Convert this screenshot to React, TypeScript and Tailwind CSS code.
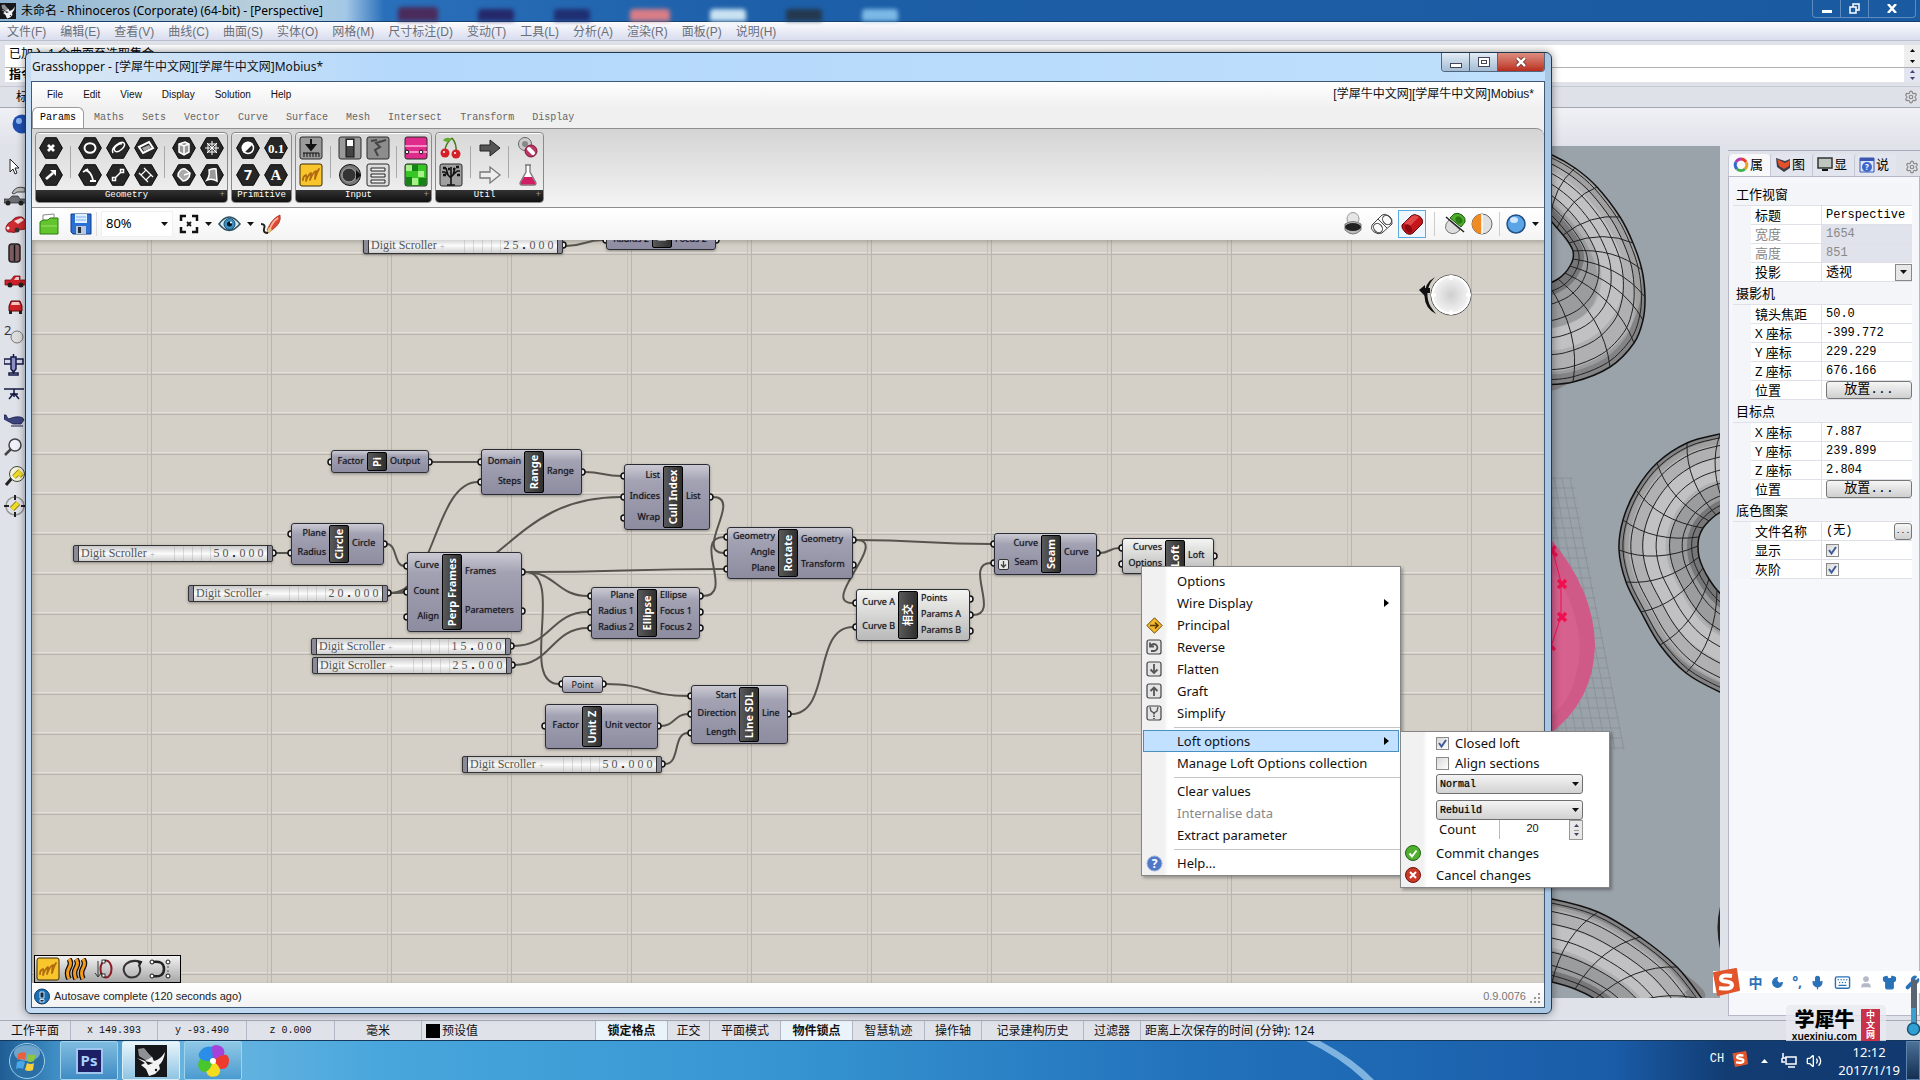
import type { ReactNode } from "react";
import { Keyboard, Mic, Moon, Settings, Shirt, User, Volume2, Wrench } from "lucide-react";
import clsx from "clsx";

type Port = [string, number];
type Pt = [number, number];

interface NodeSpec {
  title: string;
  x: number;
  y: number;
  w: number;
  h: number;
  bar: number;
  light?: boolean;
  ins: Port[];
  outs: Port[];
}

const nodes: NodeSpec[] = [
  { title: "Ellipse", x: 574, y: -42, w: 110, h: 52, bar: 46, ins: [["Plane", -33], ["Radius 1", -17], ["Radius 2", 0]], outs: [["Ellipse", -33], ["Focus 1", -17], ["Focus 2", 0]] },
  { title: "Pi", x: 299, y: 210, w: 98, h: 23, bar: 36, ins: [["Factor", 222]], outs: [["Output", 222]] },
  { title: "Range", x: 449, y: 209, w: 101, h: 46, bar: 43, ins: [["Domain", 222], ["Steps", 242]], outs: [["Range", 232]] },
  { title: "Cull Index", x: 592, y: 224, w: 86, h: 66, bar: 39, ins: [["List", 236], ["Indices", 257], ["Wrap", 278]], outs: [["List", 257]] },
  { title: "Circle", x: 259, y: 283, w: 93, h: 42, bar: 38, ins: [["Plane", 294], ["Radius", 313]], outs: [["Circle", 304]] },
  { title: "Perp Frames", x: 375, y: 312, w: 115, h: 80, bar: 35, ins: [["Curve", 326], ["Count", 352], ["Align", 377]], outs: [["Frames", 332], ["Parameters", 371]] },
  { title: "Ellipse", x: 559, y: 347, w: 109, h: 52, bar: 46, ins: [["Plane", 356], ["Radius 1", 372], ["Radius 2", 388]], outs: [["Ellipse", 356], ["Focus 1", 372], ["Focus 2", 388]] },
  { title: "Rotate", x: 695, y: 287, w: 126, h: 52, bar: 51, ins: [["Geometry", 297], ["Angle", 313], ["Plane", 329]], outs: [["Geometry", 300], ["Transform", 325]] },
  { title: "Unit Z", x: 513, y: 464, w: 113, h: 45, bar: 37, ins: [["Factor", 486]], outs: [["Unit vector", 486]] },
  { title: "Line SDL", x: 659, y: 445, w: 97, h: 59, bar: 48, ins: [["Start", 456], ["Direction", 474], ["Length", 493]], outs: [["Line", 474]] },
  { title: "相交", x: 824, y: 349, w: 114, h: 52, bar: 42, light: true, ins: [["Curve A", 363], ["Curve B", 387]], outs: [["Points", 359], ["Params A", 375], ["Params B", 391]] },
  { title: "Seam", x: 962, y: 293, w: 103, h: 42, bar: 47, ins: [["Curve", 304], ["Seam", 323]], outs: [["Curve", 313]] },
  { title: "Loft", x: 1090, y: 298, w: 92, h: 36, bar: 43, light: true, ins: [["Curves", 308], ["Options", 324]], outs: [["Loft", 316]] },
];

const scrollers = [
  { x: 331, y: -3, tens: "2", ones: "5" },
  { x: 41, y: 305, tens: "5", ones: "0" },
  { x: 156, y: 345, tens: "2", ones: "0" },
  { x: 279, y: 398, tens: "1", ones: "5" },
  { x: 280, y: 417, tens: "2", ones: "5" },
  { x: 430, y: 516, tens: "5", ones: "0" },
];

const wires: [number, number, number, number][] = [
  [531, 6, 574, 0],
  [241, 313, 259, 313],
  [352, 304, 375, 326],
  [356, 353, 375, 352],
  [356, 353, 449, 242],
  [356, 353, 592, 257],
  [397, 222, 449, 222],
  [550, 232, 592, 236],
  [678, 257, 695, 313],
  [668, 356, 695, 297],
  [490, 332, 695, 329],
  [490, 332, 559, 356],
  [490, 332, 530, 444],
  [479, 406, 559, 372],
  [480, 425, 559, 388],
  [571, 444, 659, 456],
  [626, 486, 659, 474],
  [630, 524, 659, 493],
  [756, 474, 824, 387],
  [821, 300, 962, 304],
  [821, 300, 824, 363],
  [938, 375, 962, 323],
  [1065, 313, 1090, 308],
];

function wirePath([x1, y1, x2, y2]: [number, number, number, number]) {
  const reach = Math.max((x2 - x1) * 0.5, Math.min(Math.abs(y2 - y1) * 0.6, 44));
  return `M${x1 + 3} ${y1}C${x1 + reach} ${y1} ${x2 - reach} ${y2} ${x2 - 3} ${y2}`;
}

function PortDot({ side, x, y }: { side: "in" | "out"; x: number; y: number }) {
  const d = side === "in" ? `M${x} ${y - 3}a3 3 0 0 0 0 6` : `M${x} ${y - 3}a3 3 0 0 1 0 6`;
  return <path d={d} fill="#fff" stroke="#111" strokeWidth="1.5" />;
}

function GraphNode({ n }: { n: NodeSpec }) {
  return (
    <div
      className={clsx(
        "absolute rounded-[3px] border border-[#2c2c34] text-[9px] leading-[12px] text-[#14141c] shadow-[0_1px_3px_rgba(0,0,0,0.35)] [text-shadow:0_0_1px_rgba(20,20,28,0.6)]",
        n.light ? "bg-linear-to-b from-[#f4f4f2] to-[#b9b9b9]" : "bg-linear-to-b from-[#cbcad3] via-[#a3a2b3] via-25% to-[#8d8ca0]",
      )}
      style={{ left: n.x, top: n.y, width: n.w, height: n.h }}
    >
      {n.ins.map(([label, y]) => (
        <span key={label} className="absolute text-right whitespace-nowrap" style={{ right: n.w - n.bar + 2, top: y - n.y - 8 }}>
          {label}
        </span>
      ))}
      <span
        className="absolute inset-y-px flex w-5 items-center justify-center rounded-xs border border-black bg-linear-to-r from-[#5a5a5a] to-[#2f2f2f]"
        style={{ left: n.bar - 1 }}
      >
        <span className="-rotate-90 text-[11px] font-bold whitespace-nowrap text-white">{n.title}</span>
      </span>
      {n.outs.map(([label, y]) => (
        <span key={label} className="absolute whitespace-nowrap" style={{ left: n.bar + 22, top: y - n.y - 8 }}>
          {label}
        </span>
      ))}
      {n.title === "Seam" && (
        <svg className="absolute bottom-1 left-[3px]" width="11" height="11" viewBox="0 0 11 11">
          <rect x=".5" y=".5" width="10" height="10" rx="1.5" fill="#e8e8e8" stroke="#333" />
          <path d="M5.500 2v6M3 5.500l2.500 2.700L8 5.500" fill="none" stroke="#444" strokeWidth="1.300" />
        </svg>
      )}
    </div>
  );
}

function Scroller({ x, y, tens, ones }: { x: number; y: number; tens: string; ones: string }) {
  return (
    <div
      className="absolute flex h-[17px] w-[200px] overflow-hidden rounded-[2px] border border-[#333] bg-[#8b8a98] font-['Liberation_Serif',serif] text-[12px] leading-[15px] shadow-[0_1px_3px_rgba(0,0,0,0.35)]"
      style={{ left: x, top: y }}
    >
      <div className="mx-[4px] flex flex-1 items-center border-x border-[#333] bg-linear-to-b from-[#c9c9c9] via-[#fbfbfb] to-[#cfcfcf] text-[#555]">
        <span className="flex-1 pl-0.5 whitespace-nowrap">
          Digit Scroller <span className="text-[9px] text-[#aaa]">+</span>
        </span>
        <span className="h-full w-[46px] bg-[repeating-linear-gradient(90deg,transparent_0_8px,rgba(160,160,160,0.35)_8px_9px)]" />
        <span className="w-[9px] text-center">{tens}</span>
        <span className="w-[9px] text-center">{ones}</span>
        <span className="w-[8px] text-center font-bold text-black">.</span>
        <span className="w-[9px] text-center">0</span>
        <span className="w-[9px] text-center">0</span>
        <span className="mr-0.5 w-[9px] text-center">0</span>
      </div>
    </div>
  );
}

function Canvas() {
  return (
    <div className="relative flex-1 overflow-hidden bg-[#d4d0c8] bg-[linear-gradient(90deg,transparent_115px,#c5c1b9_115px_116px,transparent_116px_119px,#b9b5ae_119px_120px),linear-gradient(180deg,transparent_12px,#e1ded8_12px_13px,transparent_13px_14px,#b9b5ae_14px_15px,transparent_15px)] bg-size-[120px_40px] shadow-[inset_2px_2px_4px_rgba(90,85,75,0.35)] font-['Noto_Sans','Noto_Sans_CJK_SC',sans-serif]">
      <svg className="absolute inset-0" width="1240" height="640" fill="none">
        {wires.map((w) => (
          <path key={w.join()} d={wirePath(w)} stroke="#57534d" strokeWidth="2" />
        ))}
        {nodes.map((n) => (
          <g key={n.title + n.x}>
            {n.ins.map(([label, y]) => <PortDot key={label} side="in" x={n.x} y={y} />)}
            {n.outs.map(([label, y]) => <PortDot key={label} side="out" x={n.x + n.w} y={y} />)}
          </g>
        ))}
        {scrollers.map((s) => <PortDot key={s.x} side="out" x={s.x + 200} y={s.y + 8} />)}
        <PortDot side="in" x={530} y={444} />
        <PortDot side="out" x={571} y={444} />
      </svg>
      {nodes.map((n) => <GraphNode key={n.title + n.x} n={n} />)}
      {scrollers.map((s) => <Scroller key={s.x} {...s} />)}
      <div className="absolute top-[436px] left-[530px] h-[17px] w-[41px] rounded-[3px] border border-[#2c2c34] bg-linear-to-b from-[#dddde4] to-[#9a99aa] text-center text-[9px] leading-[15px] text-[#14141c] shadow-sm">Point</div>

      <svg className="absolute top-[32px] right-[71px]" width="54" height="46" viewBox="0 0 54 46">
        <defs>
          <radialGradient id="dial"><stop offset="0" stopColor="#cfcfcf" /><stop offset="1" stopColor="#f7f7f7" /></radialGradient>
        </defs>
        <path d="M16 5A21 21 0 0 0 17 42L14 38A24 24 0 0 1 12 10Z" fill="#111" />
        <path d="M0 18l6-5v3h5v5H6v3z" fill="#111" />
        <circle cx="32" cy="23" r="20" fill="url(#dial)" stroke="#555" />
        <circle cx="32" cy="23" r="18.500" fill="none" stroke="#fff" strokeWidth="2" />
        <path d="M32 3v5M32 38v5M12 23h5M47 23h5" stroke="#fff" strokeWidth="3" />
      </svg>

      <div className="absolute bottom-0 left-[2px] flex h-[28px] w-[147px] items-center gap-1 border border-black bg-linear-to-b from-[#f2f2f2] to-[#a8a8a8] pl-px">
        <button aria-label="Sketch" className="h-[24px] w-[24px]"><SketchIcon /></button>
        <button aria-label="Waves">
          <svg width="24" height="22" viewBox="0 0 24 22" fill="none">
            <path d="M5 1q3 4 0 9t0 11M12 1q3 4 0 9t0 11M19 1q3 4 0 9t0 11" stroke="#111" strokeWidth="5.500" />
            <path d="M5 1q3 4 0 9t0 11M12 1q3 4 0 9t0 11M19 1q3 4 0 9t0 11" stroke="#f59a1c" strokeWidth="3" />
          </svg>
        </button>
        <button aria-label="Rotate curve">
          <svg width="24" height="22" viewBox="0 0 24 22" fill="none"><ellipse cx="14" cy="11" rx="5.500" ry="8.500" stroke="#8b1c24" strokeWidth="2" /><path d="M6 3v15M3 15l3 4 3-4" stroke="#333" /><rect x="10" y="2" width="3" height="3" fill="#fff" stroke="#111" strokeWidth=".8" /><rect x="10" y="16" width="3" height="3" fill="#fff" stroke="#111" strokeWidth=".8" /></svg>
        </button>
        <button aria-label="Closed curve">
          <svg width="24" height="22" viewBox="0 0 24 22" fill="none"><path d="M21 4Q12 1 6 6C1 11 5 19 11 19.500c8 0 11-6 8-12z" stroke="#333" strokeWidth="2" /><path d="M17 3l5 0-2 5z" fill="#222" /></svg>
        </button>
        <button aria-label="Control points">
          <svg width="24" height="22" viewBox="0 0 24 22" fill="none"><path d="M4 4Q16 2 16 11T4 18" stroke="#222" strokeWidth="2.500" /><path d="M20 4v14" stroke="#555" strokeDasharray="2 2" /><g fill="#fff" stroke="#111"><circle cx="4" cy="4" r="2" /><circle cx="4" cy="18" r="2" /><circle cx="20" cy="4" r="2" /><circle cx="20" cy="18" r="2" /></g></svg>
        </button>
      </div>
    </div>
  );
}

function SketchIcon() {
  return (
    <svg width="24" height="24" viewBox="0 0 24 24">
      <rect x="1" y="1" width="22" height="22" rx="2" fill="#f8c52c" stroke="#3a2c06" />
      <path d="M4 17q0-4 3-5 1 3 0 6 2-6 5-8 0 4-1 7 3-8 6-9-1 5-1 8 2-7 4-10" fill="none" stroke="#b06a10" strokeWidth="1.800" strokeLinejoin="round" strokeLinecap="round" />
    </svg>
  );
}

function Hex({ label, children }: { label: string; children: ReactNode }) {
  return (
    <button aria-label={label}>
      <svg width="24" height="22" viewBox="0 0 24 22" fill="none" stroke="#fff" strokeWidth="1.500">
        <path d="M6.500 .7h11L23.400 11l-5.900 10.300h-11L.6 11z" fill="#262626" stroke="#0a0a0a" strokeWidth="1" />
        {children}
      </svg>
    </button>
  );
}

function Tile({ label, fill = "#9a9a9a", children }: { label: string; fill?: string; children: ReactNode }) {
  return (
    <button aria-label={label}>
      <svg width="24" height="24" viewBox="0 0 24 24" fill="none">
        <rect x="1" y="1" width="22" height="22" rx="2" fill={fill} stroke="#2a2a2a" />
        {children}
      </svg>
    </button>
  );
}

function IconGrid({ children, className }: { children: ReactNode; className?: string }) {
  return <div className={clsx("grid grid-flow-col grid-rows-[27px_27px] place-items-center gap-x-1", className)}>{children}</div>;
}

function RibbonGroup({ name, expand = true, className, children }: { name: string; expand?: boolean; className?: string; children: ReactNode }) {
  return (
    <section className={clsx("flex h-[71px] flex-col overflow-hidden rounded-sm border border-[#8a8a8a] bg-linear-to-b from-[#d8d8d8] to-[#f2f2f2] shadow-[inset_0_1px_0_#fff]", className)}>
      <div className="flex flex-1 items-center justify-between px-[3px]">{children}</div>
      <div className={clsx("relative h-3 bg-linear-to-b from-[#333] to-[#111] text-center font-['Liberation_Mono',monospace] text-[9px] leading-[11px] text-white", expand && "pr-2.5")}>
        {name}
        {expand && <span className="absolute right-0.5 text-[#999]">+</span>}
      </div>
    </section>
  );
}

const Divider = () => <span className="h-8 w-px bg-[#a8a8a8]" />;

function Ribbon() {
  return (
    <div className="flex h-20 gap-[3px] rounded-tr-lg border-t border-b border-[#8e8e8e] bg-linear-to-b from-[#d4d4d4] to-[#f4f4f4] px-[3px] pt-[3px]">
      <RibbonGroup name="Geometry" className="w-[193px]">
        <IconGrid>
          <Hex label="Point"><path d="M9 8l6 6M15 8l-6 6" strokeWidth="2.800" /></Hex>
          <Hex label="Vector"><path d="M7 15l7-6" strokeWidth="2.500" /><path d="M11 6h6v6z" fill="#fff" stroke="none" /></Hex>
        </IconGrid>
        <Divider />
        <IconGrid>
          <Hex label="Circle"><ellipse cx="12" cy="11" rx="5.500" ry="4.800" strokeWidth="2" /></Hex>
          <Hex label="Circular arc"><path d="M7 6q6 1 8 10M5 8l5-3M12 17h6" strokeWidth="1.800" /></Hex>
          <Hex label="Curve"><path d="M7 16c-3-5 8-13 11-10s-6 11-9 8 4-8 7-7" /></Hex>
          <Hex label="Line"><path d="M8 15l8-8" /><path d="M6.500 13.500h3v3h-3zM14.500 5.500h3v3h-3z" fill="#262626" /></Hex>
          <Hex label="Plane"><path d="M5 10l10-5 4 6-10 5z" strokeWidth="2" /><path d="M8 11l7-3 2 3-7 3z" fill="#aaa" stroke="none" /></Hex>
          <Hex label="Rectangle"><path d="M12 6l5 5-5 5-5-5zM10 4l9 9M5 9l9 9" strokeWidth="1.200" /></Hex>
        </IconGrid>
        <Divider />
        <IconGrid>
          <Hex label="Box"><path d="M7 7l6-2 4 2v8l-5 3-5-3z" fill="#999" /><path d="M7 7l5 2 5-2M12 9v9" /></Hex>
          <Hex label="Brep"><path d="M6 12c0-5 4-8 7-7l5 4c0 5-4 8-7 8z" fill="#aaa" /><path d="M12 11l6-2" /></Hex>
          <Hex label="Mesh"><path d="M12 4v14M5 11h14M7 6l10 10M17 6L7 16M8 7h8v8H8z" strokeWidth="1" /></Hex>
          <Hex label="Surface"><path d="M9 6q5-2 7-1l1 12q-5-3-10-1 3-4 2-10z" fill="#999" /></Hex>
        </IconGrid>
      </RibbonGroup>
      <RibbonGroup name="Primitive" expand={false} className="w-[61px]">
        <IconGrid className="mx-auto">
          <Hex label="Boolean"><circle cx="12" cy="11" r="5.500" /><path d="M8 15A5.500 5.500 0 0 1 16 7z" fill="#fff" /></Hex>
          <Hex label="Integer"><text x="12" y="16" textAnchor="middle" fontSize="14" fontWeight="700" fill="#fff" stroke="none">7</text></Hex>
          <Hex label="Number"><text x="12" y="16" textAnchor="middle" fontSize="13" fontWeight="700" fontFamily="Liberation Serif" fill="#fff" stroke="none">0.1</text></Hex>
          <Hex label="Text"><text x="12" y="16" textAnchor="middle" fontSize="15" fontWeight="700" fontFamily="Liberation Serif" fill="#fff" stroke="none">A</text></Hex>
        </IconGrid>
      </RibbonGroup>
      <RibbonGroup name="Input" className="w-[137px]">
        <IconGrid>
          <Tile label="Button"><path d="M12 3v8M8 9l4 5 4-5z" fill="#111" stroke="#111" strokeWidth="2" /><path d="M4 17h16M5 17v4M8 17v4M11 17v4M14 17v4M17 17v4M20 17v4" stroke="#111" /></Tile>
          <button aria-label="Graph"><SketchIcon /></button>
        </IconGrid>
        <Divider />
        <IconGrid>
          <Tile label="Slider"><rect x="8" y="3" width="8" height="18" fill="#444" stroke="#111" /><path d="M9 4h6v6H9z" fill="#fff" /></Tile>
          <button aria-label="Knob"><svg width="24" height="24" viewBox="0 0 24 24"><circle cx="12" cy="12" r="10.500" fill="#777" stroke="#111" /><circle cx="11" cy="12" r="7" fill="#333" stroke="#aaa" /><path d="M18 7l5 5-5 5z" fill="#111" /></svg></button>
          <Tile label="Scroller" fill="#8d8d8d"><path d="M20 4L10 7l4 4-5 3 3 6M5 5l6-1" stroke="#444" strokeWidth="2" /></Tile>
          <Tile label="Value list" fill="#ddd"><path d="M5 5h14v3H5zM5 11h14v3H5zM5 17h14v3H5z" stroke="#222" fill="#eee" /></Tile>
        </IconGrid>
        <Divider />
        <IconGrid>
          <Tile label="Gradient" fill="#e02a8c"><path d="M1 10h22M1 16h22" stroke="#ffb3dc" strokeWidth="1.500" /><circle cx="3" cy="16" r="1.800" fill="#fff" stroke="#111" /><circle cx="17" cy="16" r="1.800" fill="#fff" stroke="#111" /></Tile>
          <Tile label="Colours" fill="#36c626"><path d="M2 2h6v6H2zM14 8h6v6h-6zM8 15h6v7H8z" fill="#a7f08a" /><path d="M8 2h6v6H8zM2 14h6v8H2zM15 15h7v7h-7z" fill="#17821a" /></Tile>
        </IconGrid>
      </RibbonGroup>
      <RibbonGroup name="Util" className="w-[109px]">
        <IconGrid>
          <button aria-label="Cherry picker"><svg width="24" height="24" viewBox="0 0 24 24"><path d="M13 2Q6 8 6 15M13 2q5 6 4 14" fill="none" stroke="#487a1e" strokeWidth="1.500" /><path d="M11 5q-5 2-7-1 4-4 8-1z" fill="#5fae2b" /><circle cx="6" cy="17" r="4.500" fill="#d5202a" /><circle cx="17" cy="18" r="4.500" fill="#d5202a" /><circle cx="5" cy="16" r="1" fill="#fff" /><circle cx="16" cy="17" r="1" fill="#fff" /></svg></button>
          <Tile label="Data tree" fill="#a0a0a0"><path d="M12 22V11M12 15L6 9M12 14l6-6M9 12L7 5M14 12l2-7M12 11V4M6 9L3 9M18 8h3M8 22h8" stroke="#111" strokeWidth="1.600" /><path d="M4 5h3M17 4h3M9 6h2M14 6h2M4 12h3M18 12h3" stroke="#111" strokeWidth="2.500" /></Tile>
        </IconGrid>
        <Divider />
        <IconGrid>
          <button aria-label="Relay in"><svg width="24" height="22" viewBox="0 0 24 22"><path d="M2 8h10V3l10 8-10 8v-5H2z" fill="#555" stroke="#222" /></svg></button>
          <button aria-label="Relay out"><svg width="24" height="22" viewBox="0 0 24 22"><path d="M2 8h10V3l10 8-10 8v-5H2z" fill="#eee" stroke="#777" strokeWidth="1.300" /></svg></button>
        </IconGrid>
        <Divider />
        <IconGrid>
          <button aria-label="Cluster"><svg width="24" height="24" viewBox="0 0 24 24"><circle cx="9" cy="8" r="6.500" fill="#ccc" stroke="#666" /><circle cx="9" cy="8" r="3" fill="#888" /><circle cx="15" cy="15" r="6" fill="#b93563" stroke="#7a1a3c" /><path d="M13 13l4 4" stroke="#fff" strokeWidth="4" strokeLinecap="round" /></svg></button>
          <button aria-label="Galapagos"><svg width="24" height="24" viewBox="0 0 24 24"><path d="M9 2h6M10 2v7L4 20q0 2 2 2h12q2 0 2-2L14 9V2" fill="#fff" stroke="#777" strokeWidth="1.300" /><path d="M8 14h8l3.500 6q0 1.500-1.500 1.500H6q-1.500 0-1.500-1.500z" fill="#cf1f62" /></svg></button>
        </IconGrid>
      </RibbonGroup>
    </div>
  );
}

function Caret() {
  return <svg width="7" height="4" viewBox="0 0 7 4"><path d="M0 0h7L3.500 4z" fill="#111" /></svg>;
}

function CanvasToolbar() {
  return (
    <div className="flex h-8 items-center bg-linear-to-b from-white to-[#f4f4f4] pr-[5px] pl-[7px]">
      <button aria-label="Open" className="mr-[9px]">
        <svg width="22" height="24" viewBox="0 0 22 24"><path d="M4 9V3l11-1v6" fill="#fff" stroke="#888" /><path d="M1 10l3-2h5l2-2h8v16H1z" fill="#62c52d" stroke="#2c7a12" /><path d="M2 14h16" stroke="#9be56c" /></svg>
      </button>
      <button aria-label="Save">
        <svg width="22" height="24" viewBox="0 0 22 24"><path d="M1 2h20v20H3l-2-2z" fill="#2a6fd6" stroke="#123c84" /><path d="M5 2h12v9H5z" fill="#dff0ff" /><path d="M6 14h10v8H6z" fill="#b9c7d8" /><path d="M8 15h3v6H8z" fill="#234" /><path d="M6 5h10M6 8h10" stroke="#7ab1ea" /></svg>
      </button>
      <span className="mx-1 h-6 w-px bg-[#ddd]" />
      <div className="grid w-[72px] items-center border border-[#f0f0f0] bg-white">
        <select aria-label="Zoom" className="col-start-1 row-start-1 h-6 appearance-none pl-1 text-[13px]"><option>80%</option></select>
        <span className="pointer-events-none col-start-1 row-start-1 mr-1 justify-self-end"><Caret /></span>
      </div>
      <button aria-label="Zoom extents" className="ml-1.5 flex items-center gap-1.5">
        <svg width="20" height="20" viewBox="0 0 20 20" fill="none" stroke="#111" strokeWidth="2.500"><path d="M2 7V2h5M13 2h5v5M18 13v5h-5M7 18H2v-5" /><path d="M8 8l4 4M12 8l-4 4" strokeWidth="1.800" /></svg>
        <Caret />
      </button>
      <button aria-label="Preview" className="ml-1.5 flex items-center gap-1.5">
        <svg width="23" height="18" viewBox="0 0 23 18"><path d="M1 9q10-14 21 0-11 13-21 0z" fill="#d7eaf3" stroke="#2b4f62" strokeWidth="1.500" /><circle cx="11.500" cy="9" r="5.500" fill="#3b8fc0" stroke="#174a68" /><circle cx="11.500" cy="9" r="2.500" fill="#05131d" /><circle cx="13" cy="7.500" r="1" fill="#fff" /></svg>
        <Caret />
      </button>
      <button aria-label="Sketch mode" className="ml-1">
        <svg width="24" height="24" viewBox="0 0 24 24"><path d="M22 3q2 8-8 15l-4 3q-2-3 1-7 4-8 11-11z" fill="#e04a35" stroke="#9a2416" strokeWidth=".7" /><path d="M20 6q-6 4-8 11" stroke="#f9b39f" strokeWidth="1.800" fill="none" /><path d="M14 18q-2 3-5 3 0-3 2-6z" fill="#e8c37a" /><path d="M3 12q5 0 3 5-1 4 4 4" fill="none" stroke="#222" strokeWidth="2" /></svg>
      </button>
      <div className="ml-auto flex items-center">
        <button aria-label="No preview" className="mr-1.5">
          <svg width="22" height="26" viewBox="0 0 22 26"><ellipse cx="11" cy="8" rx="6" ry="6.500" fill="#e6e6e6" stroke="#999" /><path d="M3 13q8-5 16 0v6q-8 8-16 0z" fill="#bbb" stroke="#777" /><ellipse cx="11" cy="16" rx="8" ry="4" fill="#222" /></svg>
        </button>
        <button aria-label="Wireframe preview" className="mr-1">
          <svg width="24" height="24" viewBox="0 0 24 24" fill="none" stroke="#444"><path d="M2 13L12 3q3-2 7 1t3 8L12 21q-4 2-8-1t-2-7z" fill="#fafafa" /><ellipse cx="8" cy="16" rx="4" ry="5" transform="rotate(-40 8 16)" /><ellipse cx="17" cy="8" rx="4" ry="5" transform="rotate(-40 17 8)" /><path d="M8 7l9 9" /></svg>
        </button>
        <button aria-label="Shaded preview" className="flex h-7 w-7 items-center justify-center border border-[#5aa9e0] bg-[#eef7fd]">
          <svg width="23" height="23" viewBox="0 0 23 23"><path d="M1 12L10 3q3-3 8 0t3 8l-9 9q-4 3-8-1t-3-7z" fill="#c4161c" stroke="#5c0508" /><path d="M11 3q4-2 7 1l-9 9q-4-1-6-3z" fill="#e85452" opacity=".8" /><ellipse cx="7.500" cy="15.500" rx="3" ry="4.500" fill="#8c0a0f" transform="rotate(-40 7.500 15.500)" /></svg>
        </button>
        <span className="mx-2 h-6 w-px bg-[#ccc]" />
        <button aria-label="Selected preview" className="mr-1">
          <svg width="24" height="24" viewBox="0 0 24 24"><path d="M7 6l4-4q4-2 8 1t3 7l-4 5z" fill="#4fae2c" stroke="#1d5c0c" /><path d="M6 8l11 10-4 3q-4 2-8-1t-2-8z" fill="#ddd" stroke="#777" /><path d="M3 5l18 15" stroke="#222" strokeWidth="1.500" /><ellipse cx="16" cy="8" rx="3" ry="4" fill="#2b7b13" transform="rotate(-40 16 8)" /></svg>
        </button>
        <button aria-label="Document preview" className="mr-1.5">
          <svg width="22" height="22" viewBox="0 0 22 22"><circle cx="11" cy="11" r="10" fill="#e0e0e0" stroke="#666" /><path d="M11 1a10 10 0 0 0 0 20z" fill="#ef8b22" /><path d="M11 1v20" stroke="#fff" strokeWidth="1.500" /></svg>
        </button>
        <span className="mr-1.5 h-6 w-px bg-[#ccc]" />
        <button aria-label="Mesh quality" className="flex items-center gap-1.5">
          <svg width="20" height="20" viewBox="0 0 20 20"><circle cx="10" cy="10" r="9" fill="#5ba4e6" stroke="#1f4f86" strokeWidth="1.500" /><ellipse cx="8" cy="6" rx="4" ry="3" fill="#cfe7fb" /></svg>
          <Caret />
        </button>
      </div>
    </div>
  );
}

function GrasshopperWindow() {
  return (
    <div className="absolute top-[52px] right-[368px] bottom-[66px] left-[25px] flex flex-col rounded-md border border-[#22384e] bg-linear-to-r from-[#c3dcf4] to-[#a9c6e2] pr-[6px] pb-[5px] pl-[5px] shadow-[0_0_8px_rgba(0,0,0,0.45)]">
      <header className="flex h-[28px] items-start justify-between bg-linear-to-r from-[#dbe7f4] via-[#b3d8fb] via-25% to-[#bfdffc]">
        <h2 className="pt-[6px] pl-px text-[12px] leading-4 text-[#111]">Grasshopper - [学犀牛中文网][学犀牛中文网]Mobius*</h2>
        <div className="flex h-[19px] overflow-hidden rounded-b border border-t-0 border-[#51657c]">
          <button aria-label="Minimize" className="flex w-7 items-center justify-center border-r border-[#51657c] bg-linear-to-b from-[#e3edf6] to-[#a4bcd4]"><span className="mt-1.5 h-[5px] w-3 border border-[#445] bg-white" /></button>
          <button aria-label="Maximize" className="flex w-7 items-center justify-center border-r border-[#51657c] bg-linear-to-b from-[#e3edf6] to-[#a4bcd4]"><span className="flex h-[10px] w-3 items-center justify-center border border-[#445] bg-white"><span className="h-1 w-1.5 border border-[#445]" /></span></button>
          <button aria-label="Close" className="flex w-[46px] items-center justify-center bg-linear-to-b from-[#dc8d80] to-[#b92b1d]"><svg width="12" height="10" viewBox="0 0 12 10"><path d="M2 1l8 8M10 1L2 9" stroke="#5a1a14" strokeWidth="4" /><path d="M2 1l8 8M10 1L2 9" stroke="#fff" strokeWidth="2.500" /></svg></button>
        </div>
      </header>
      <div className="flex flex-1 flex-col overflow-hidden border border-[#3f5a76] bg-[#f0f0f0]">
        <nav className="flex h-6 items-center gap-5 bg-linear-to-b from-white to-[#f1f1f1] pr-[10px] pl-[15px] font-['Liberation_Sans',sans-serif] text-[10px] text-[#111]">
          {["File", "Edit", "View", "Display", "Solution", "Help"].map((m) => <button key={m}>{m}</button>)}
          <span className="ml-auto font-['Liberation_Sans','Noto_Sans_CJK_SC',sans-serif] text-[12px]">[学犀牛中文网][学犀牛中文网]Mobius*</span>
        </nav>
        <div role="tablist" className="flex h-[22px] items-end gap-[18px] font-['Liberation_Mono',monospace] text-[10px] leading-[20px] text-[#666]">
          <button role="tab" className="-mr-[8px] rounded-t-md border border-b-0 border-[#9a9a9a] bg-white px-[7px] text-black">Params</button>
          {["Maths", "Sets", "Vector", "Curve", "Surface", "Mesh", "Intersect", "Transform", "Display"].map((t) => (
            <button role="tab" key={t}>{t}</button>
          ))}
        </div>
        <Ribbon />
        <CanvasToolbar />
        <Canvas />
        <footer className="flex h-6 items-center gap-1 bg-linear-to-b from-white to-[#f2f2f2] px-0.5 pt-[3px] font-['Liberation_Sans',sans-serif] text-[11px] text-[#222]">
          <svg width="16" height="17" viewBox="0 0 16 17"><circle cx="8" cy="8.500" r="7.500" fill="#1b6fb5" stroke="#0b3a66" /><path d="M6 4h4v6H6zM6 11.500h4v2.500H6z" fill="#0d2f4d" stroke="#fff" strokeWidth=".8" /></svg>
          Autosave complete (120 seconds ago)
          <span className="ml-auto text-[#777]">0.9.0076</span>
          <svg width="12" height="12" viewBox="0 0 12 12" className="mt-1" fill="#999"><path d="M8 0h2v2H8zM4 4h2v2H4zM8 4h2v2H8zM0 8h2v2H0zM4 8h2v2H4zM8 8h2v2H8z" /></svg>
        </footer>
      </div>
    </div>
  );
}

function TickBox({ id, checked }: { id: string; checked?: boolean }) {
  return (
    <span className="grid w-[13px]">
      <input id={id} type="checkbox" defaultChecked={checked} className="peer col-start-1 row-start-1 size-[13px] appearance-none border border-[#8a8a8a] bg-linear-to-br from-[#d8d8d8] to-white" />
      <svg className="pointer-events-none invisible col-start-1 row-start-1 peer-checked:visible" width="13" height="13" viewBox="0 0 13 13"><path d="M3 6l2.500 3.500L10 3" fill="none" stroke="#3f5c9a" strokeWidth="2" /></svg>
    </span>
  );
}

const Badge = ({ children }: { children: ReactNode }) => (
  <svg width="16" height="16" viewBox="0 0 16 16" fill="none" stroke="#555" strokeWidth="1.800">
    <rect x="1" y="1" width="14" height="14" rx="2" fill="#e4e4e6" stroke="#444" strokeWidth="1.200" />
    {children}
  </svg>
);

const menuItems: { label: string; icon?: ReactNode; arrow?: boolean; active?: boolean; muted?: boolean; rule?: boolean }[] = [
  { label: "Options" },
  { label: "Wire Display", arrow: true },
  { label: "Principal", icon: <svg width="17" height="17" viewBox="0 0 17 17"><path d="M8.500 .8l7.700 7.700-7.700 7.700L.8 8.500z" fill="#f3b72b" stroke="#6d4a08" /><path d="M4 8.500h7M9 5.500l3 3-3 3" fill="none" stroke="#5a3a05" strokeWidth="1.600" /></svg> },
  { label: "Reverse", icon: <Badge><path d="M5 12h3a3.500 3.500 0 1 0-3-5.500M4 3.500v4h4" /></Badge> },
  { label: "Flatten", icon: <Badge><path d="M8 3v9M4.500 8.500L8 12l3.500-3.500" /></Badge> },
  { label: "Graft", icon: <Badge><path d="M8 13V4M4.500 8L8 4.500 11.500 8" /></Badge> },
  { label: "Simplify", icon: <Badge><path d="M4 2l1 4 3 2 3-2 1-4" strokeWidth="1.300" /><path d="M8 8v6" strokeDasharray="1.500 1" /></Badge> },
  { label: "Loft options", arrow: true, active: true, rule: true },
  { label: "Manage Loft Options collection" },
  { label: "Clear values", rule: true },
  { label: "Internalise data", muted: true },
  { label: "Extract parameter" },
  { label: "Help...", rule: true, icon: <svg width="17" height="17" viewBox="0 0 17 17"><circle cx="8.500" cy="8.500" r="7.500" fill="#4f78c8" stroke="#9fb4de" /><text x="8.500" y="13" textAnchor="middle" fontSize="12" fontWeight="700" fill="#fff">?</text></svg> },
];

function ContextMenu() {
  return (
    <div role="menu" className="absolute top-[566px] left-[1141px] w-[260px] border border-[#868686] bg-linear-to-r from-[#f1f1f1] from-[22px] to-white to-[26px] pt-[3px] pb-px text-[13px] leading-[22px] text-[#111] shadow-[2px_2px_3px_rgba(0,0,0,0.3)]">
      {menuItems.map((m) => (
        <div key={m.label}>
          {m.rule && <hr className="mt-[3px] mb-[2px] ml-8 border-[#c4c4c4]" />}
          <button
            role="menuitem"
            className={clsx(
              "mx-px flex h-[22px] w-[256px] items-center border px-0.5 text-left",
              m.active ? "border-[#4a8fc4] bg-[#c2e0ff]" : "border-transparent",
              m.muted && "text-[#888]",
            )}
          >
            <span className="w-[31px]">{m.icon}</span>
            {m.label}
            {m.arrow && <svg className="mr-[7px] ml-auto" width="5" height="8" viewBox="0 0 5 8"><path d="M0 0l5 4-5 4z" fill="#000" /></svg>}
          </button>
        </div>
      ))}
    </div>
  );
}

function LoftSelect({ id, value }: { id: string; value: string }) {
  return (
    <div className="grid w-[147px] items-center">
      <select id={id} aria-label={id} className="col-start-1 row-start-1 h-5 appearance-none rounded-[3px] border border-[#707070] bg-linear-to-b from-[#f4f4f4] to-[#d2d2d2] pl-[3px] font-['Liberation_Mono',monospace] text-[10px] text-black [text-shadow:0_0_1px_rgba(0,0,0,0.6)]">
        <option>{value}</option>
      </select>
      <span className="pointer-events-none col-start-1 row-start-1 mr-1 justify-self-end"><Caret /></span>
    </div>
  );
}

function LoftMenu() {
  return (
    <div role="menu" className="absolute top-[731px] left-[1400px] w-[210px] border border-[#868686] bg-linear-to-r from-[#f1f1f1] from-[22px] to-white to-[26px] pb-px pl-[35px] text-[13px] text-[#111] shadow-[2px_2px_3px_rgba(0,0,0,0.3)]">
      <div className="flex h-[23px] items-center gap-1.5"><TickBox id="closed" checked /><label htmlFor="closed">Closed loft</label></div>
      <div className="mb-0.5 flex h-[17px] items-center gap-1.5"><TickBox id="align" /><label htmlFor="align">Align sections</label></div>
      <LoftSelect id="Loft type" value="Normal" />
      <div className="mt-1.5"><LoftSelect id="Fit" value="Rebuild" /></div>
      <div className="flex h-[19px] w-[147px] items-center">
        <label htmlFor="count" className="w-[63px] pl-[3px]">Count</label>
        <input id="count" defaultValue="20" className="w-[66px] border-l border-[#bbb] pb-0.5 text-center font-['Liberation_Sans',sans-serif] text-[11px]" />
        <span className="ml-auto grid w-[14px] border border-[#999] bg-[#e8e8e8] py-px">
          <button aria-label="Up" className="mx-auto h-2"><svg width="5" height="3" viewBox="0 0 5 3"><path d="M0 3h5L2.500 0z" fill="#446" /></svg></button>
          <button aria-label="Down" className="mx-auto h-2 border-t border-[#999]"><svg width="5" height="3" viewBox="0 0 5 3"><path d="M0 0h5L2.500 3z" fill="#446" /></svg></button>
        </span>
      </div>
      <div className="-ml-[31px] pt-[3px] leading-[22px]">
        <button className="flex h-[22px] items-center gap-[15px]">
          <svg width="16" height="16" viewBox="0 0 16 16"><circle cx="8" cy="8" r="7.500" fill="#4fb02e" stroke="#1d6210" /><path d="M4.500 8.500l2.500 3 4.500-6" fill="none" stroke="#fff" strokeWidth="2" /></svg>
          Commit changes
        </button>
        <button className="flex h-[22px] items-center gap-[15px]">
          <svg width="16" height="16" viewBox="0 0 16 16"><circle cx="8" cy="8" r="7.500" fill="#c8392a" stroke="#6d130b" /><path d="M5 5l6 6M11 5l-6 6" stroke="#fff" strokeWidth="2" /></svg>
          Cancel changes
        </button>
      </div>
    </div>
  );
}

// smooth open curve through points (Catmull-Rom)
function spline(p: Pt[]) {
  let d = `M${p[0][0]} ${p[0][1]}`;
  for (let i = 0; i < p.length - 1; i++) {
    const a = p[Math.max(i - 1, 0)];
    const b = p[i];
    const c = p[i + 1];
    const e = p[Math.min(i + 2, p.length - 1)];
    d += `C${b[0] + (c[0] - a[0]) / 6} ${b[1] + (c[1] - a[1]) / 6} ${c[0] - (e[0] - b[0]) / 6} ${c[1] - (e[1] - b[1]) / 6} ${c[0]} ${c[1]}`;
  }
  return d;
}

const mix = (a: Pt, b: Pt, t: number): Pt => [a[0] + (b[0] - a[0]) * t, a[1] + (b[1] - a[1]) * t];

function Torus({ id, outer, inner }: { id: string; outer: Pt[]; inner: Pt[] }) {
  const steps = [0.05, 0.15, 0.3, 0.47, 0.64, 0.8, 0.92];
  const ring = (t: number) => outer.map((o, i) => mix(o, inner[i], t));
  const body = spline([...outer, ...[...inner].reverse()]) + "Z";
  const shades: [number, number, string][] = [
    [0.02, 16, "#555555"],
    [0.35, 44, "#d8d8d8"],
    [0.45, 22, "#e2e2e2"],
    [0.95, 14, "#333333"],
  ];
  return (
    <g fill="none">
      <clipPath id={id}><path d={body} /></clipPath>
      <path d={body} fill="#9b9c9e" />
      <g clipPath={`url(#${id})`}>
        {shades.map(([t, w, c]) => <path key={t} d={spline(ring(t))} stroke={c} strokeWidth={w} opacity="0.35" />)}
      </g>
      {steps.map((t) => <path key={t} d={spline(ring(t))} stroke="#222" strokeWidth="1" />)}
      <path d={spline(outer)} stroke="#111" strokeWidth="1.500" />
      <path d={spline(inner)} stroke="#111" strokeWidth="1.500" />
      {outer.map((o, i) => {
        const b = inner[i];
        const m = mix(o, b, 0.45);
        const k = 0.2;
        return <path key={i} d={`M${o[0]} ${o[1]}Q${m[0] + (o[1] - b[1]) * k} ${m[1] - (o[0] - b[0]) * k} ${b[0]} ${b[1]}`} stroke="#222" strokeWidth="1" />;
      })}
    </g>
  );
}

function ViewportScene() {
  return (
    <svg className="ml-auto w-[170px] shrink-0" viewBox="1550 146 170 852" height="852">
      <Torus
        id="ringA"
        outer={[[1535, 150], [1552, 155], [1575, 168], [1597, 187], [1620, 217], [1633, 243], [1642, 270], [1645, 297], [1643, 320], [1634, 343], [1610, 367], [1573, 382], [1540, 385]]}
        inner={[[1528, 205], [1540, 211], [1550, 220], [1557, 228], [1563, 235], [1569, 243], [1573, 251], [1573, 259], [1570, 266], [1565, 273], [1558, 279], [1548, 284], [1540, 286]]}
      />
      <g stroke="#868c94" strokeWidth="1" opacity="0.7">
        {Array.from({ length: 28 }, (_, i) => <path key={i} d={`M1550 ${478 + i * 10}H${1573 + i * 1.9}`} />)}
        {Array.from({ length: 8 }, (_, i) => <path key={i} d={`M${1570 - i * 8} 478L${1624 - i * 9} 750`} />)}
      </g>
      <path d="M1550 538Q1594 590 1595 645Q1594 700 1550 734Z" fill="#cf5a88" />
      <path d="M1550 570Q1578 600 1580 650Q1576 700 1550 716Z" fill="#e06a98" opacity="0.4" />
      <g stroke="#f0104e" strokeWidth="3.500">
        <path d="M1558 580l8 8M1566 580l-8 8M1558 613l8 8M1566 613l-8 8M1549 548l8 8M1555 546l-5 9M1548 643l7 7" />
        <path d="M1553 552l8 30v34l-9 28" strokeWidth="1" fill="none" />
      </g>
      <Torus
        id="ringB"
        outer={[[1745, 430], [1720, 434], [1687, 443], [1657, 463], [1636, 490], [1623, 520], [1619, 550], [1626, 582], [1641, 612], [1660, 645], [1686, 673], [1720, 692], [1745, 700]]}
        inner={[[1740, 503], [1726, 509], [1716, 515], [1709, 521], [1703, 528], [1699, 537], [1698, 546], [1699, 557], [1703, 568], [1709, 579], [1717, 590], [1728, 600], [1742, 608]]}
      />
      <Torus
        id="ringC"
        outer={[[1520, 896], [1552, 899], [1598, 912], [1640, 937], [1677, 967], [1703, 1000]]}
        inner={[[1515, 978], [1535, 979], [1552, 982], [1575, 989], [1595, 999], [1612, 1012]]}
      />
      <path d="M1721 903q-7 24 0 50z" fill="#222" />
    </svg>
  );
}

function PropRow({ id, label, value, kind = "text" }: { id: string; label: string; value?: string; kind?: string }) {
  const muted = kind === "muted";
  return (
    <div className="grid h-[19px] grid-cols-[18px_71px_1fr] items-stretch">
      <span className="bg-[#f4f5f9]" />
      <label htmlFor={id} className={clsx("border-r border-b border-[#e0e1e8] bg-white pl-1 leading-[18px]", muted && "text-[#888]")}>{label}</label>
      <div className={clsx("flex items-center border-b border-[#e0e1e8] pl-1 font-['Liberation_Mono','Noto_Sans_CJK_SC',monospace] text-[12px]", muted ? "bg-[#e0e2ec] text-[#888]" : "bg-white")}>
        {(kind === "text" || muted) && <input id={id} defaultValue={value} className="w-full" />}
        {kind === "button" && <button id={id} className="-my-px h-[18px] w-full rounded-[3px] border border-[#777] bg-linear-to-b from-[#f6f6f6] to-[#cfcfcf] text-[13px] leading-4">放置...</button>}
        {kind === "check" && <TickBox id={id} checked />}
        {kind === "file" && (
          <>
            <input id={id} defaultValue={value} className="w-0 flex-1" />
            <button aria-label="Browse" className="h-[17px] w-[18px] rounded-[3px] border border-[#777] bg-linear-to-b from-[#f6f6f6] to-[#cfcfcf] text-[8px] leading-3">...</button>
          </>
        )}
        {kind === "select" && (
          <div className="grid w-full items-center">
            <select id={id} className="col-start-1 row-start-1 h-[18px] appearance-none text-[13px]"><option>{value}</option></select>
            <span className="pointer-events-none col-start-1 row-start-1 flex h-[17px] w-[17px] items-center justify-center justify-self-end border border-[#888] bg-[#e8e8e8]"><Caret /></span>
          </div>
        )}
      </div>
    </div>
  );
}

const PropHead = ({ children }: { children: ReactNode }) => (
  <h3 className="h-[23px] border-b border-[#e0e1e8] bg-[#f4f5f9] pl-[3px] leading-[22px]">{children}</h3>
);

const panelTabs: [string, ReactNode][] = [
  ["属", <svg key="a" width="16" height="16" viewBox="0 0 16 16" fill="none" strokeWidth="3"><path d="M8 2a6 6 0 0 1 5 3" stroke="#e83b2c" /><path d="M13 5a6 6 0 0 1-1 7" stroke="#e9a51f" /><path d="M12 12a6 6 0 0 1-8 0" stroke="#3fae49" /><path d="M4 12a6 6 0 0 1-1-7" stroke="#3567c8" /><path d="M3 5a6 6 0 0 1 5-3" stroke="#b03aa8" /></svg>],
  ["图", <svg key="b" width="16" height="16" viewBox="0 0 16 16"><path d="M1 1l9 3 5-2v9l-6 4-7-5z" fill="#3b3f4a" /><path d="M2 2l8 4 5-3-1 6-5 3-5-3z" fill="#e5502a" /></svg>],
  ["显", <svg key="c" width="16" height="16" viewBox="0 0 16 16"><path d="M1 1h14v10H1z" fill="#bfc6bd" stroke="#333" strokeWidth="1.500" /><path d="M5 12h6v2H5z" fill="#111" /></svg>],
  ["说", <svg key="d" width="16" height="16" viewBox="0 0 16 16"><path d="M1 1h14v14H1z" fill="#dce6fa" stroke="#3a56b0" /><path d="M1 1h14v3H1z" fill="#3a56b0" /><circle cx="8" cy="10" r="5" fill="#3b66cc" /><text x="8" y="13" textAnchor="middle" fontSize="8" fontWeight="700" fill="#fff">?</text></svg>],
];

function PropertiesPanel() {
  return (
    <aside className="mt-1 mb-1 ml-2 flex w-[192px] shrink-0 flex-col border-t border-[#a9adbb] pt-[3px]">
      <div role="tablist" className="flex h-[22px] items-stretch text-[13px]">
        {panelTabs.map(([name, icon], i) => (
          <button key={name} role="tab" className={clsx("flex w-[42px] items-center gap-px rounded-t border-l border-[#c4c7d4] pl-1", i === 0 ? "bg-[#f8f8fb]" : "bg-[#e2e4ee]")}>
            {icon}
            {name}
          </button>
        ))}
        <button aria-label="Panel options" className="mt-1 ml-auto pr-px"><Settings size={14} color="#888" /></button>
      </div>
      <div className="flex-1 border border-[#b4b8c8] bg-[#f6f7fa] pt-[6px] pr-[7px] pl-[4px] text-[13px]">
        <PropHead>工作视窗</PropHead>
        <PropRow id="title" label="标题" value="Perspective" />
        <PropRow id="width" label="宽度" value="1654" kind="muted" />
        <PropRow id="height" label="高度" value="851" kind="muted" />
        <PropRow id="proj" label="投影" value="透视" kind="select" />
        <PropHead>摄影机</PropHead>
        <PropRow id="lens" label="镜头焦距" value="50.0" />
        <PropRow id="cx" label="X 座标" value="-399.772" />
        <PropRow id="cy" label="Y 座标" value="229.229" />
        <PropRow id="cz" label="Z 座标" value="676.166" />
        <PropRow id="cpos" label="位置" kind="button" />
        <PropHead>目标点</PropHead>
        <PropRow id="tx" label="X 座标" value="7.887" />
        <PropRow id="ty" label="Y 座标" value="239.899" />
        <PropRow id="tz" label="Z 座标" value="2.804" />
        <PropRow id="tpos" label="位置" kind="button" />
        <PropHead>底色图案</PropHead>
        <PropRow id="file" label="文件名称" value="(无)" kind="file" />
        <PropRow id="show" label="显示" kind="check" />
        <PropRow id="gray" label="灰阶" kind="check" />
      </div>
    </aside>
  );
}

function SideTools() {
  return (
    <div className="flex w-[34px] shrink-0 flex-col items-start gap-[8px] pt-[12px] pl-1">
      <svg width="22" height="18" viewBox="0 0 22 18"><path d="M6 1v13l3-3 2 5 2-1-2-5h4z" fill="#fff" stroke="#222" /></svg>
      <svg width="22" height="23" viewBox="0 0 22 23"><path d="M8 9q4-8 13-5v4h-8l-3 2z" fill="#bbb" stroke="#444" /><path d="M0 15h5l3-3h6l2 3h6v4H0z" fill="#6b6e74" stroke="#222" strokeWidth=".7" /><circle cx="4" cy="19" r="2.500" fill="#222" /><circle cx="17" cy="19" r="2.500" fill="#222" /></svg>
      <svg width="22" height="20" viewBox="0 0 22 20"><path d="M2 12q1-4 6-6 3-5 10-4 4 2 4 7v5l-8 1q-3 4-7 2-6 1-5-5z" fill="#cf2b30" stroke="#6b0d10" strokeWidth=".8" /><path d="M10 6l7-3 3 2-6 4z" fill="#f6dcdc" /><circle cx="13" cy="15" r="2.500" fill="#333" /><circle cx="4" cy="13" r="1.500" fill="#fff" /></svg>
      <svg width="22" height="20" viewBox="0 0 22 20"><rect x="5" y="1" width="11" height="18" rx="3" fill="#7d5b60" stroke="#222" strokeWidth="1.500" /><path d="M10.500 2v16" stroke="#111" strokeWidth="1.500" /></svg>
      <svg width="22" height="18" viewBox="0 0 22 18"><path d="M1 9h6l3-4h6v4h6v5H1z" fill="#cf2127" stroke="#7a0c10" strokeWidth=".8" /><path d="M10 9l2-3h3v3z" fill="#f4c6c6" /><circle cx="6" cy="14" r="2.500" fill="#222" /><circle cx="17" cy="14" r="2.500" fill="#222" /></svg>
      <svg width="22" height="18" viewBox="0 0 22 18"><path d="M7 4h9l2 5v5H5V9z" fill="#cf2127" stroke="#5a0a0c" /><path d="M8 5h7l1 3H7z" fill="#f4c6c6" /><path d="M5 14h3v3H5zM15 14h3v3h-3z" fill="#222" /></svg>
      <svg width="22" height="22" viewBox="0 0 22 22"><text x="0" y="12" fontSize="13" fill="#333">2</text><circle cx="13" cy="14" r="6" fill="#ddd" stroke="#777" /></svg>
      <svg width="22" height="24" viewBox="0 0 22 24" fill="none" stroke="#141a44" strokeWidth="1.500"><path d="M0 6h19v5H0zM9.500 1v20M5 20h9v2H5z" fill="#d8daea" /><path d="M7 4h5v12l-2.500 3L7 16z" fill="#8a8fc4" /></svg>
      <svg width="22" height="18" viewBox="0 0 22 18" fill="none" stroke="#141a44" strokeWidth="1.500"><path d="M0 4h20M10 4v8M5 14l5-6 5 6M6 9h8" /></svg>
      <svg width="22" height="18" viewBox="0 0 22 18"><path d="M0 4h2l2 4 7-2q8-1 9 3l-3 4h-8L0 8z" fill="#3d4580" stroke="#141a44" strokeWidth=".8" /><path d="M7 15h12" stroke="#141a44" /></svg>
      <svg width="22" height="20" viewBox="0 0 22 20" fill="#eef2f8" stroke="#444" strokeWidth="1.500"><path d="M1 18l6-6" strokeWidth="2.500" /><circle cx="11" cy="8" r="6" /></svg>
      <svg width="22" height="22" viewBox="0 0 22 22"><path d="M2 20l6-7" stroke="#222" strokeWidth="3" /><circle cx="13" cy="9" r="7.500" fill="#f3f3d8" stroke="#444" /><path d="M10 12l6-6M15 11l3-3" stroke="#8c7c10" strokeWidth="5" /><path d="M10 12l6-6M15 11l3-3" stroke="#f0dc28" strokeWidth="3.500" /></svg>
      <svg width="22" height="22" viewBox="0 0 22 22" fill="none"><circle cx="11" cy="11" r="9" stroke="#999" strokeWidth="1.500" /><path d="M11 0v5M11 17v5M0 11h5M17 11h5" stroke="#222" strokeWidth="2" /><path d="M8 14l6-6" stroke="#8c7c10" strokeWidth="6" /><path d="M8 14l6-6" stroke="#f0dc28" strokeWidth="4" /></svg>
    </div>
  );
}

function SougouMark({ size }: { size: number }) {
  return (
    <svg width={size} height={size} viewBox="0 0 28 28">
      <path d="M2 5L24 1l3 21-21 5z" fill="#e2542a" stroke="#e2542a" strokeWidth="2" strokeLinejoin="round" />
      <path d="M20 8q-11-2-11 3c0 4 11 1 11 6q0 5-13 3" fill="none" stroke="#fff" strokeWidth="4" />
    </svg>
  );
}

function RhinoHead({ size }: { size: number }) {
  return (
    <svg width={size} height={size} viewBox="0 0 32 32">
      <path d="M0 0h32v32H0z" fill="#15171a" />
      <path d="M3 4l6-1 5 6 4 4-6 3-8-5z" fill="#8d9094" />
      <path d="M2 13l8 3 7-4 2 4q6-1 11-9-1 9-6 13l1 4-5 5-6 2-3-7-5-4 4-2z" fill="#f2f2f2" />
      <path d="M10 16l8 2-5 2z" fill="#15171a" />
      <circle cx="21" cy="25" r="1.200" fill="#15171a" />
    </svg>
  );
}

const statusCells: [string, string][] = [
  ["工作平面", "w-[71px]"],
  ["x 149.393", "w-[87px] font-['Liberation_Mono',monospace] text-[10px]"],
  ["y -93.490", "w-[89px] font-['Liberation_Mono',monospace] text-[10px]"],
  ["z 0.000", "w-[88px] font-['Liberation_Mono',monospace] text-[10px]"],
  ["毫米", "w-[87px]"],
];

const toggles: [string, string, boolean][] = [
  ["锁定格点", "w-[72px]", true],
  ["正交", "w-[42px]", false],
  ["平面模式", "w-[71px]", false],
  ["物件锁点", "w-[72px]", true],
  ["智慧轨迹", "w-[72px]", false],
  ["操作轴", "w-[57px]", false],
  ["记录建构历史", "w-[102px]", false],
  ["过滤器", "w-[57px]", false],
];

function StatusBar() {
  return (
    <div className="flex h-[21px] shrink-0 items-stretch border-t border-b border-t-[#a7abb8] border-b-[#14375c] bg-[#e0e2ea] text-[12px] leading-[20px] text-[#111]">
      {statusCells.map(([text, cls]) => (
        <span key={text} className={clsx("border-r border-[#b4b8c6] text-center", cls)}>{text}</span>
      ))}
      <span className="flex w-[174px] items-center gap-0.5 border-r border-[#b4b8c6] pl-1"><span className="size-3.5 bg-black" />预设值</span>
      {toggles.map(([text, cls, on]) => (
        <button key={text} className={clsx("border-r border-[#b4b8c6]", cls, on && "bg-[#eaf3fa] font-bold")}>{text}</button>
      ))}
      <span className="pl-1">距离上次保存的时间 (分钟): 124</span>
    </div>
  );
}

function Taskbar() {
  return (
    <div className="relative flex h-[39px] shrink-0 items-stretch bg-[linear-gradient(90deg,#1f5c94_0%,#3f8fc6_3%,#6ab6e0_10%,#48a6dc_20%,#3796d2_40%,#2272bb_62%,#1a5ca8_84%,#123c72_90%,#123a70_100%)] pl-2 text-white">
      <svg className="absolute inset-y-0 left-[68%] opacity-70" width="80" height="39" viewBox="0 0 80 39"><path d="M0 0h14q34 18 54 39H58Q34 16 0 0z" fill="#a8d4f4" /></svg>
      <button aria-label="Start" className="mr-[14px] self-center">
        <svg width="38" height="38" viewBox="0 0 38 38"><circle cx="19" cy="19" r="17.500" fill="#2a6ea6" stroke="#9fd0ec" /><ellipse cx="19" cy="11" rx="13" ry="8" fill="#9fc9e4" opacity=".6" /><path d="M10 12q4-3 8-1l-1 7q-4-2-8 0z" fill="#e8603c" /><path d="M20 12q4 2 8 0l-2 7q-4 2-7 0z" fill="#8cc63e" /><path d="M9 20q4-2 8 0l-2 7q-4-2-7 0z" fill="#4aa7e8" /><path d="M19 21q4 2 7 0l-1 7q-4 2-8 0z" fill="#f7cf3c" /></svg>
      </button>
      <button aria-label="Photoshop" className="mr-1 flex w-[58px] items-center justify-center rounded-xs border border-[#9fd3ee] bg-linear-to-b from-[#7fbce0] to-[#3f8cc4]">
        <span className="flex h-[26px] w-[27px] items-center justify-center border-2 border-[#9fc6ee] bg-[#1c1f66] text-[15px] leading-none font-bold text-[#a9d4ff]">Ps</span>
      </button>
      <button aria-label="Rhinoceros" className="mr-1 flex w-[58px] items-center justify-center rounded-xs border border-[#d8eef8] bg-linear-to-b from-[#e8f5fb] to-[#8fc4e2]">
        <RhinoHead size={32} />
      </button>
      <button aria-label="Pinwheel" className="flex w-[58px] items-center justify-center rounded-xs border border-[#9fd3ee] bg-linear-to-b from-[#8fc8e6] to-[#4a9bd0]">
        <svg width="34" height="34" viewBox="0 0 34 34">
          <path d="M17 17Q10 2 20 1q10 1 8 10z" fill="#a742d8" /><path d="M17 17Q32 5 33 16q0 10-9 9z" fill="#ee3b2e" /><path d="M17 17q12 9 4 15-9 3-11-5z" fill="#f6dc1e" /><path d="M17 17q-4 14-12 10-6-6 0-13z" fill="#49c52e" /><path d="M17 17Q1 18 3 9q5-8 13-6z" fill="#2a8ee8" />
          <circle cx="17" cy="17" r="3" fill="#fff" />
        </svg>
      </button>
      <div className="ml-auto flex items-center text-[13px] leading-[18px]">
        <span className="mr-2 mb-1 font-['Liberation_Mono',monospace] text-[12px]">CH</span>
        <span className="mb-1"><SougouMark size={16} /></span>
        <svg className="mx-[13px]" width="7" height="4" viewBox="0 0 7 4"><path d="M0 4h7L3.500 0z" fill="#fff" /></svg>
        <svg className="mr-[9px]" width="16" height="15" viewBox="0 0 16 15" fill="none" stroke="#fff" strokeWidth="1.500"><path d="M5 4h10v7H5zM7 14h7M2 0v5h3M1 5v4h3" /></svg>
        <Volume2 size={16} className="mr-4" />
        <div className="mr-1.5 text-center">12:12<br />2017/1/19</div>
      </div>
      <button aria-label="Show desktop" className="w-[14px] border border-[#5d84ad] bg-linear-to-b from-[#4d7198] to-[#142f52]" />
    </div>
  );
}

const rhinoMenus = ["文件(F)", "编辑(E)", "查看(V)", "曲线(C)", "曲面(S)", "实体(O)", "网格(M)", "尺寸标注(D)", "变动(T)", "工具(L)", "分析(A)", "渲染(R)", "面板(P)", "说明(H)"];

export default function App() {
  return (
    <div className="relative flex min-h-screen flex-col overflow-hidden bg-[#e0e2ea] font-['Noto_Sans','Noto_Sans_CJK_SC',sans-serif]">
      <header className="flex h-[22px] shrink-0 items-center border-b border-[#173f6e] bg-[linear-gradient(90deg,#8fb4d2_0%,#a9c6d8_8%,#b9cfdc_14%,#a3c8e6_18%,#2a6fba_20%,#1d5fa8_40%,#1a5aa0_100%)] text-[12px] text-black">
        <span className="mr-1"><RhinoHead size={16} /></span>
        <h1 className="pl-px">未命名 - Rhinoceros (Corporate) (64-bit) - [Perspective]</h1>
        <div className="ml-[75px] flex items-end gap-10 self-end">
          <span className="h-3.5 w-10 rounded-t bg-[#4a2c5c] blur-[2px]" />
          <span className="h-3 w-9 rounded-t bg-[#25296b] blur-[2px]" />
          <span className="h-3 w-9 rounded-t bg-[#1f2f72] blur-[2px]" />
          <span className="h-3 w-10 rounded-t bg-[#d87d86] blur-[2px]" />
          <span className="h-3 w-9 rounded-t bg-[#c9e2f2] blur-[2px]" />
          <span className="h-3 w-9 rounded-t bg-[#24394f] blur-[2px]" />
          <span className="h-3 w-9 rounded-t bg-[#7cb8e6] blur-[2px]" />
        </div>
        <div className="mr-1 ml-auto flex h-[18px] self-start rounded-b border border-t-0 border-[#5d8cc0] text-white">
          <button aria-label="Minimize Rhinoceros" className="flex w-7 items-center justify-center border-r border-[#5d8cc0]"><span className="mt-1.5 h-[3px] w-2.5 bg-white" /></button>
          <button aria-label="Restore Rhinoceros" className="flex w-7 items-center justify-center border-r border-[#5d8cc0]"><svg width="11" height="11" viewBox="0 0 11 11" fill="none" stroke="#fff" strokeWidth="1.500"><path d="M1 4h6v6H1zM4 4V1h6v6H7" /></svg></button>
          <button aria-label="Close Rhinoceros" className="flex w-[46px] items-center justify-center"><svg width="10" height="9" viewBox="0 0 10 9"><path d="M1 0l8 9M9 0L1 9" stroke="#fff" strokeWidth="2.500" /></svg></button>
        </div>
      </header>
      <nav className="flex h-[19px] shrink-0 items-center gap-[14px] border-b border-[#b9bdcc] bg-linear-to-b from-[#fbfcfe] to-[#d9ddee] pt-px pl-[7px] font-['Liberation_Sans','Noto_Sans_CJK_SC',sans-serif] text-[12px] text-[#6a6e78]">
        {rhinoMenus.map((m) => <button key={m}>{m}</button>)}
      </nav>
      <div className="flex h-[45px] shrink-0 flex-col pt-[4px] pl-[5px] text-[12px]">
        <div className="flex h-[23px] items-start border-b border-[#b0b0b0] bg-white pl-1">
          <span>已加入 1 个曲面至选取集合。</span>
          <span className="ml-auto flex h-full w-4 flex-col items-center justify-around bg-[#eee]"><svg width="5" height="3" viewBox="0 0 5 3"><path d="M0 3h5L2.500 0z" /></svg><svg width="5" height="3" viewBox="0 0 5 3"><path d="M0 0h5L2.500 3z" /></svg></span>
        </div>
        <div className="flex h-[14px] items-center bg-white pl-1 font-bold">
          <label htmlFor="command">指令:</label>
          <input id="command" className="flex-1" />
          <span className="flex h-full w-4 flex-col items-center justify-around bg-[#e3e5f0]"><svg width="5" height="3" viewBox="0 0 5 3"><path d="M0 3h5L2.500 0z" fill="#447" /></svg><svg width="5" height="3" viewBox="0 0 5 3"><path d="M0 0h5L2.500 3z" fill="#447" /></svg></span>
        </div>
      </div>
      <div className="flex h-[22px] shrink-0 items-center justify-between border-t border-b border-t-[#c6c9d3] border-b-[#a3a7b4] bg-[#dfe1e8] pr-0.5 pl-4 text-[12px]">
        <span>标准</span>
        <Settings size={14} color="#888" />
      </div>
      <div className="h-[38px] shrink-0 bg-linear-to-b from-[#f0f1f5] to-[#e0e2ea] pt-1.5 pl-3">
        <svg width="20" height="20" viewBox="0 0 20 20"><circle cx="10" cy="10" r="9.500" fill="#1f4fb0" /><circle cx="7" cy="7" r="3" fill="#8fb4f0" /></svg>
      </div>
      <main className="flex flex-1">
        <SideTools />
        <div className="mb-[22px] flex flex-1 overflow-hidden bg-[#9aa2aa]"><ViewportScene /></div>
        <PropertiesPanel />
      </main>

      <GrasshopperWindow />
      <ContextMenu />
      <LoftMenu />

      <div className="absolute right-0 bottom-[87px] flex h-[22px] w-[207px] items-center justify-between bg-white text-[#2a72b8]">
        <span className="-my-1 -ml-px"><SougouMark size={28} /></span>
        <span className="text-[14px] font-bold">中</span>
        <Moon size={13} fill="#2a72b8" />
        <span className="text-[14px] leading-none font-bold">°,</span>
        <Mic size={15} fill="#2a72b8" />
        <Keyboard size={17} />
        <User size={14} color="#b5bac8" fill="#b5bac8" />
        <Shirt size={15} fill="#2a72b8" />
        <Wrench size={15} fill="#2a72b8" />
      </div>

      <div className="absolute right-[34px] bottom-[35px] flex items-center gap-1 rounded-sm bg-[#e8eaf0]/80 px-1.5 py-[3px]">
        <div className="text-center text-black">
          <p className="font-['Noto_Sans_CJK_SC',sans-serif] text-[20px] leading-[22px] font-black">学犀牛</p>
          <p className="text-[10px] leading-[12px] font-semibold">xuexiniu.com</p>
        </div>
        <p className="flex w-[19px] flex-col items-center bg-[#c8324a] py-px text-[9px] leading-[10px] font-bold text-white"><span>中</span><span>文</span><span>网</span></p>
      </div>
      <svg className="absolute right-0 bottom-[42px]" width="14" height="60" viewBox="0 0 14 60"><path d="M5 3q3-4 6 0v42H5z" fill="#5b6572" /><path d="M5 30h5v20H5z" fill="#3d9fd0" /><circle cx="7.500" cy="51" r="6" fill="#2fa0d4" stroke="#1c5676" strokeWidth="1.500" /></svg>

      <StatusBar />
      <Taskbar />
    </div>
  );
}
